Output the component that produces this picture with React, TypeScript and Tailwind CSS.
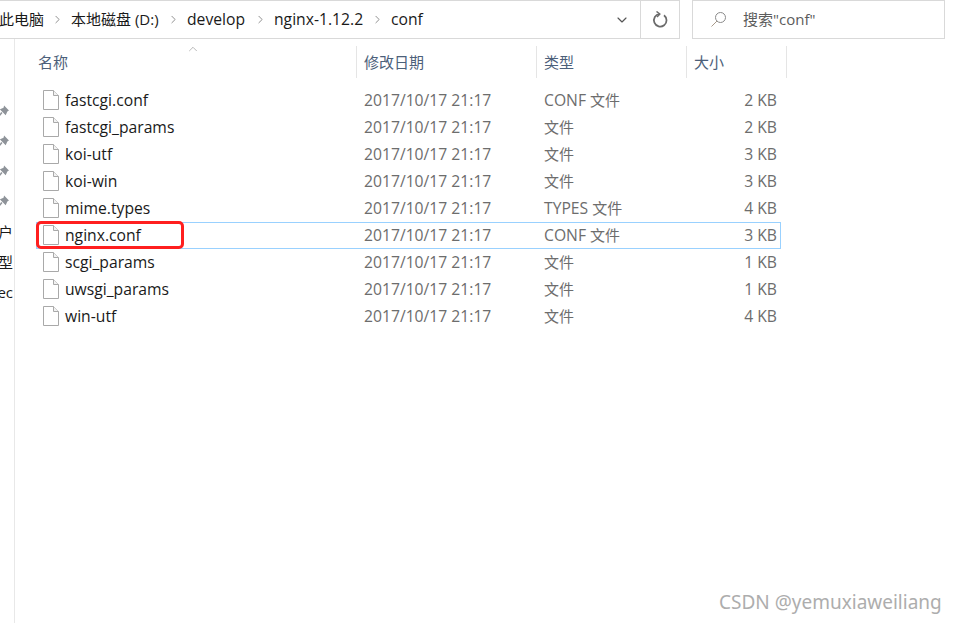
import React from 'react';
import { ChevronDown, ChevronRight, ChevronUp } from 'lucide-react';

const font = "font-['Open_Sans','Noto_Sans_CJK_SC',sans-serif]";

const files = [
  { name: 'fastcgi.conf', ext: 'CONF', size: '2 KB' },
  { name: 'fastcgi_params', ext: '', size: '2 KB' },
  { name: 'koi-utf', ext: '', size: '3 KB' },
  { name: 'koi-win', ext: '', size: '3 KB' },
  { name: 'mime.types', ext: 'TYPES', size: '4 KB' },
  { name: 'nginx.conf', ext: 'CONF', size: '3 KB', selected: true },
  { name: 'scgi_params', ext: '', size: '1 KB' },
  { name: 'uwsgi_params', ext: '', size: '1 KB' },
  { name: 'win-utf', ext: '', size: '4 KB' },
];

function FileIcon() {
  return (
    <svg width="16" height="20" viewBox="0 0 16 20" className="shrink-0">
      <path d="M0.5 0.5H10.5L15.5 5.5V19.5H0.5Z" fill="#fff" stroke="#a9a9a9" />
      <path d="M10.5 0.5V5.5H15.5" fill="#f2f2f2" stroke="#a9a9a9" />
    </svg>
  );
}

function PinIcon() {
  return (
    <svg width="12" height="13" viewBox="0 0 11 12" className="shrink-0 ml-[-3px]">
      <path d="M6.5 0.5L11 5L9.5 6L8 9.5L2.5 4L6 2.5Z" fill="#8e9399" />
      <path d="M4.5 7L1 11" stroke="#8e9399" strokeWidth="1.5" />
    </svg>
  );
}

function RefreshIcon() {
  return (
    <svg width="18" height="18" viewBox="0 0 18 18" fill="none" stroke="#6b6b6b" strokeWidth="1.75">
      <path d="M13 4.2A6.3 6.3 0 1 1 8.5 3" />
      <path d="M5.5 0.5L8.8 3L6 6" strokeWidth="1.5" />
    </svg>
  );
}

function Crumb({ label, width }: { label: string; width: string }) {
  return (
    <div className={`flex items-center ${width}`}>
      <span className="whitespace-nowrap">{label}</span>
    </div>
  );
}

function Sep() {
  return <ChevronRight className="w-[13px] h-[13px] text-[#777] shrink-0 mr-[7px]" strokeWidth={1.5} />;
}

function Header({ label, width, pad }: { label: string; width: string; pad: string }) {
  return (
    <div className={`h-[32px] flex items-center border-r border-[#e5e5e5] ${width} ${pad}`}>
      <span className="text-[15px] leading-[20px] mt-[-1px] text-[#4c607a]">{label}</span>
    </div>
  );
}

export default function App() {
  return (
    <div className={`relative w-[957px] h-[623px] overflow-hidden bg-white text-[15px] ${font}`}>
      <div className="flex h-[39px]">
        <div className="w-[680px] flex items-center border-y border-r border-[#d9d9d9] text-[#1a1a1a]">
          <Crumb label="此电脑" width="w-[52px] ml-[-1px]" />
          <Sep />
          <Crumb label="本地磁盘 (D:)" width="w-[96px]" />
          <Sep />
          <Crumb label="develop" width="w-[67px] text-[15.7px]" />
          <Sep />
          <Crumb label="nginx-1.12.2" width="w-[97px] text-[15.7px]" />
          <Sep />
          <span className="text-[15.7px]">conf</span>
          <div className="flex-1" />
          <ChevronDown className="w-[16px] h-[16px] text-[#555] mr-[10px]" strokeWidth={1.75} />
          <div className="w-[39px] h-full border-l border-[#d9d9d9] flex items-center justify-center">
            <RefreshIcon />
          </div>
        </div>
        <div className="w-[253px] ml-[12px] flex items-center border-y border-x border-[#d9d9d9] text-[#5c5c5c]">
          <svg width="17" height="17" viewBox="0 0 17 17" fill="none" stroke="#8a8a8a" className="ml-[17px] mr-[16px] shrink-0">
            <circle cx="10.5" cy="6.5" r="5" />
            <path d="M7 10L1.5 15.5" stroke="#a89a8a" />
          </svg>
          <span>搜索"conf"</span>
        </div>
      </div>

      <div className="flex h-[584px]">
        <div className="w-[15px] border-r border-[#e8e8e8] text-[#1a1a1a] overflow-hidden shrink-0 flex flex-col items-end pt-[57px] pr-[1px]">
          {[0, 1, 2, 3].map(i => (
            <div key={i} className="h-[30px] w-full flex items-center">
              <PinIcon />
            </div>
          ))}
          {['户', '型', 'ec'].map(t => (
            <div key={t} className="h-[30px] flex items-center justify-end whitespace-nowrap text-[15px] pt-[2px]">
              {t}
            </div>
          ))}
        </div>

        <div className="pl-[21px]">
          <div className="relative flex pt-[7px] w-[772px]">
            <ChevronUp className="absolute left-[150px] top-[3px] w-[14px] h-[14px] text-[#888]" strokeWidth={1} />
            <Header label="名称" width="w-[321px]" pad="pl-[2px]" />
            <Header label="修改日期" width="w-[180px]" pad="pl-[7px]" />
            <Header label="类型" width="w-[150px]" pad="pl-[7px]" />
            <Header label="大小" width="w-[100px]" pad="pl-[7px]" />
          </div>

          <div className="mt-[9px] w-[745px] leading-[20px]">
            {files.map(f => (
              <div
                key={f.name}
                className={`relative flex items-center h-[27px] ${f.selected ? 'outline outline-1 -outline-offset-1 outline-[#99d1ff]' : ''}`}
              >
                <div className="w-[321px] flex items-center pl-[7px] pb-[2px] text-[#1a1a1a]">
                  <FileIcon />
                  <span className="ml-[6px] whitespace-nowrap text-[15.7px]">{f.name}</span>
                </div>
                <div className="w-[180px] pl-[7px] pb-[2px] text-[#6d6d6d] text-[15.7px]">2017/10/17 21:17</div>
                <div className="w-[150px] pl-[7px] pb-[2px] text-[#6d6d6d] whitespace-nowrap">
                  {f.ext && <span className="text-[15.7px]">{f.ext} </span>}文件
                </div>
                <div className="w-[90px] pb-[2px] text-right text-[#6d6d6d] text-[15.7px]">{f.size}</div>
                {f.selected && (
                  <div className="absolute left-0 top-[-1px] w-[148px] h-[28px] border-[3px] border-[#ff1f1f] rounded-[5px]" />
                )}
              </div>
            ))}
          </div>
        </div>
      </div>

      <div className="absolute left-[719px] top-[588px] text-[19px] text-[#adadad] whitespace-nowrap font-['Noto_Sans',sans-serif]">
        CSDN @yemuxiaweiliang
      </div>
    </div>
  );
}
